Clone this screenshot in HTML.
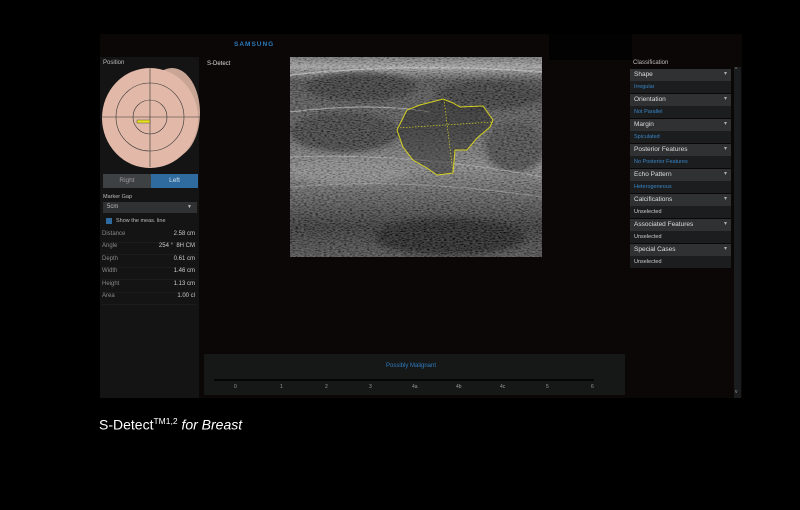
<!DOCTYPE html>
<html><head><meta charset="utf-8">
<style>
*{margin:0;padding:0;box-sizing:border-box}
body{width:800px;height:510px;background:#000;position:relative;overflow:hidden;font-family:"Liberation Sans",sans-serif}
.abs{position:absolute}
.scr{left:100px;top:34px;width:642px;height:364px;background:#0c0707}
.t{font-size:6px;color:#bbb;position:absolute;white-space:nowrap}
.lp{left:100px;top:57px;width:99px;height:341px;background:#141414}
.row{position:absolute;left:102px;width:95px;font-size:6px;color:#888;height:12px;border-bottom:1px solid #1c1c1c}
.row b{position:absolute;right:2px;font-weight:normal;color:#ccc}
.cl{position:absolute;left:630px;width:101px}
.ch{height:12px;background:#2f3133;font-size:6.5px;color:#ddd;padding:2px 4px;position:relative}
.ch:after{content:"▾";position:absolute;right:4px;top:1px;font-size:6px;color:#aaa}
.cv{height:12px;background:#1b1d1e;font-size:5.5px;padding:3px 4px;color:#3a86c8}
.cv.w{color:#ccc}
</style></head><body>
<div class="abs scr"></div>
<div class="abs" style="left:549px;top:34px;width:83px;height:26px;background:#030202"></div>
<div class="t" style="left:234px;top:41px;color:#2a79b8;font-weight:bold;font-size:6.5px;letter-spacing:1px">SAMSUNG</div>
<div class="abs lp"></div>
<div class="t" style="left:103px;top:60px">Position</div>
<div class="t" style="left:207px;top:61px;color:#ddd">S-Detect</div>
<svg class="abs" style="left:100px;top:67px" width="100" height="102">
<ellipse cx="72" cy="46" rx="28" ry="45" fill="#c9a595"/>
<ellipse cx="50" cy="51" rx="48" ry="50" fill="#e2b9a8"/>
<g stroke="#333" stroke-width="0.6" fill="none">
<circle cx="50" cy="50" r="34"/><circle cx="50" cy="50" r="17"/>
<line x1="0" y1="50" x2="100" y2="50"/><line x1="50" y1="0" x2="50" y2="100"/>
</g>
<rect x="37" y="53" width="13" height="3" fill="#e8e020" stroke="#333" stroke-width="0.4"/>
</svg>
<div class="abs" style="left:103px;top:174px;width:48px;height:14px;background:#3d4143;color:#999;font-size:6.5px;text-align:center;line-height:14px">Right</div>
<div class="abs" style="left:151px;top:174px;width:47px;height:14px;background:#2f6b9e;color:#cfe0ee;font-size:6.5px;text-align:center;line-height:14px">Left</div>
<div class="t" style="left:103px;top:194px;font-size:5.5px">Marker Gap</div>
<div class="abs" style="left:103px;top:202px;width:94px;height:11px;background:#2f3133;color:#bbb;font-size:6px;padding:2px 4px">5cm<span style="position:absolute;right:5px;font-size:5px">▼</span></div>
<div class="abs" style="left:106px;top:218px;width:6px;height:6px;background:#2f6b9e"></div>
<div class="t" style="left:116px;top:218px;font-size:5.5px">Show the meas. line</div>
<div class="row" style="top:231px">Distance<b>2.58 cm</b></div>
<div class="row" style="top:243px">Angle<b>254 °&nbsp; 8H CM</b></div>
<div class="row" style="top:256px">Depth<b>0.61 cm</b></div>
<div class="row" style="top:268px">Width<b>1.46 cm</b></div>
<div class="row" style="top:281px">Height<b>1.13 cm</b></div>
<div class="row" style="top:293px">Area<b>1.00 cl</b></div>
<svg class="abs" style="left:290px;top:57px" width="252" height="200">
<defs>
<filter id="n"><feTurbulence type="fractalNoise" baseFrequency="0.35 0.9" numOctaves="2" seed="3"/><feColorMatrix values="0 0 0 1.3 -0.4 0 0 0 1.3 -0.4 0 0 0 1.3 -0.4 0 0 0 0 0.3"/></filter>
<filter id="b"><feGaussianBlur stdDeviation="3"/></filter>
<linearGradient id="g" x1="0" y1="0" x2="0" y2="1">
<stop offset="0" stop-color="#777"/><stop offset=".05" stop-color="#b0b0b0"/><stop offset=".12" stop-color="#4a4a4a"/><stop offset=".35" stop-color="#5a5a5a"/><stop offset=".55" stop-color="#8a8a8a"/><stop offset=".7" stop-color="#5a5a5a"/><stop offset=".85" stop-color="#2a2a2a"/><stop offset="1" stop-color="#4a4a4a"/></linearGradient>
</defs>
<rect width="252" height="200" fill="url(#g)"/>
<g filter="url(#b)">
<ellipse cx="70" cy="30" rx="55" ry="14" fill="#303030"/>
<ellipse cx="55" cy="75" rx="55" ry="20" fill="#383838"/>
<ellipse cx="200" cy="38" rx="55" ry="14" fill="#333"/>
<ellipse cx="225" cy="90" rx="30" ry="25" fill="#444"/>
<ellipse cx="160" cy="180" rx="75" ry="18" fill="#161616"/>
<ellipse cx="60" cy="115" rx="60" ry="12" fill="#909090"/>
</g>
<path d="M0 18 Q120 5 252 15" stroke="#ccc" stroke-width="1.5" fill="none" opacity=".85"/>
<path d="M0 55 Q80 45 140 55" stroke="#bbb" stroke-width="1.2" fill="none" opacity=".8"/>
<path d="M0 100 Q120 95 252 120" stroke="#bbb" stroke-width="1.2" fill="none" opacity=".7"/>
<path d="M0 130 Q120 120 252 140" stroke="#aaa" stroke-width="1" fill="none" opacity=".7"/>
<rect width="252" height="200" filter="url(#n)"/>
<path d="M107 73 L117 53 L130 48 L153 42 L163 46 L170 50 L193 49 L203 63 L200 70 L187 81 L177 93 L165 93 L163 116 L147 118 L137 111 L123 103 L113 90 Z" fill="#222" fill-opacity=".45" stroke="#d4d020" stroke-width="1"/>
<path d="M107 71 L203 65 M154 42 L163 116" stroke="#d4d020" stroke-width=".7" stroke-dasharray="1.5 1.5"/>
</svg>
<div class="abs" style="left:204px;top:354px;width:421px;height:41px;background:#161818"></div>
<div class="t" style="left:386px;top:363px;color:#2f7bbd;font-size:6px">Possibly Malignant</div>
<div class="abs" style="left:214px;top:379px;width:380px;height:2px;background:#050505"></div>
<div class="t" style="left:234px;top:384px;font-size:5px;color:#999">0</div>
<div class="t" style="left:280px;top:384px;font-size:5px;color:#999">1</div>
<div class="t" style="left:325px;top:384px;font-size:5px;color:#999">2</div>
<div class="t" style="left:369px;top:384px;font-size:5px;color:#999">3</div>
<div class="t" style="left:412px;top:384px;font-size:5px;color:#999">4a</div>
<div class="t" style="left:456px;top:384px;font-size:5px;color:#999">4b</div>
<div class="t" style="left:500px;top:384px;font-size:5px;color:#999">4c</div>
<div class="t" style="left:546px;top:384px;font-size:5px;color:#999">5</div>
<div class="t" style="left:591px;top:384px;font-size:5px;color:#999">6</div>
<div class="t" style="left:633px;top:60px">Classification</div>
<div class="abs" style="left:734px;top:67px;width:7px;height:331px;background:#1a1c1d"></div>
<div class="t" style="left:735px;top:67px;font-size:5px;color:#999">^</div>
<div class="t" style="left:735px;top:389px;font-size:5px;color:#999">v</div>
<div class="cl" style="top:69px">
<div class="ch">Shape</div><div class="cv">Irregular</div>
<div class="ch" style="margin-top:1px">Orientation</div><div class="cv">Not Parallel</div>
<div class="ch" style="margin-top:1px">Margin</div><div class="cv">Spiculated</div>
<div class="ch" style="margin-top:1px">Posterior Features</div><div class="cv">No Posterior Features</div>
<div class="ch" style="margin-top:1px">Echo Pattern</div><div class="cv">Heterogeneous</div>
<div class="ch" style="margin-top:1px">Calcifications</div><div class="cv w">Unselected</div>
<div class="ch" style="margin-top:1px">Associated Features</div><div class="cv w">Unselected</div>
<div class="ch" style="margin-top:1px">Special Cases</div><div class="cv w">Unselected</div>
</div>
<div class="t" style="left:99px;top:416px;font-size:14px;color:#fff">S-Detect<sup style="font-size:8.5px">TM1,2</sup> <i>for Breast</i></div>
</body></html>
